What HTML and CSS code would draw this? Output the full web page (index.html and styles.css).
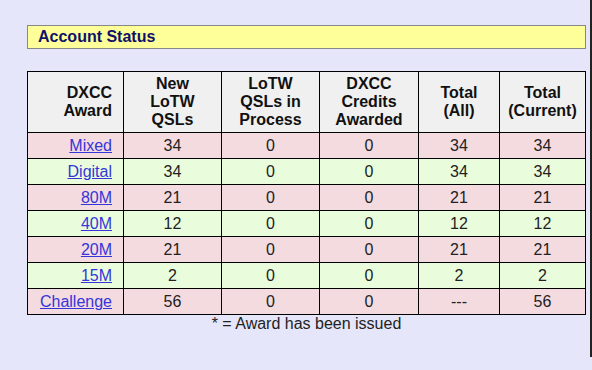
FILE: index.html
```html
<!DOCTYPE html>
<html>
<head>
<meta charset="utf-8">
<link rel="stylesheet" href="styles.css">
</head>
<body>
<div class="page">
  <div class="status">Account Status</div>
  <table class="awards">
    <colgroup>
      <col class="c1"><col class="c2"><col class="c3"><col class="c4"><col class="c5"><col class="c6">
    </colgroup>
    <thead>
      <tr class="head">
        <th class="name">DXCC<br>Award</th>
        <th>New<br>LoTW<br>QSLs</th>
        <th>LoTW<br>QSLs in<br>Process</th>
        <th>DXCC<br>Credits<br>Awarded</th>
        <th>Total<br>(All)</th>
        <th>Total<br>(Current)</th>
      </tr>
    </thead>
    <tbody>
      <tr class="pink"><td class="name"><a href="#">Mixed</a></td><td>34</td><td>0</td><td>0</td><td>34</td><td>34</td></tr>
      <tr class="green"><td class="name"><a href="#">Digital</a></td><td>34</td><td>0</td><td>0</td><td>34</td><td>34</td></tr>
      <tr class="pink"><td class="name"><a href="#">80M</a></td><td>21</td><td>0</td><td>0</td><td>21</td><td>21</td></tr>
      <tr class="green"><td class="name"><a href="#">40M</a></td><td>12</td><td>0</td><td>0</td><td>12</td><td>12</td></tr>
      <tr class="pink"><td class="name"><a href="#">20M</a></td><td>21</td><td>0</td><td>0</td><td>21</td><td>21</td></tr>
      <tr class="green"><td class="name"><a href="#">15M</a></td><td>2</td><td>0</td><td>0</td><td>2</td><td>2</td></tr>
      <tr class="pink"><td class="name"><a href="#">Challenge</a></td><td>56</td><td>0</td><td>0</td><td>---</td><td>56</td></tr>
    </tbody>
  </table>
  <div class="note">* = Award has been issued</div>
</div>
</body>
</html>
```
FILE: styles.css
```css
html, body {
  margin: 0;
  padding: 0;
  background: #e6e6fa;
  font-family: "Liberation Sans", Arial, sans-serif;
}
.page {
  box-sizing: border-box;
  width: 592px;
  height: 357px;
  padding: 25px 0 0 27px;
  border-right: 2px solid #222;
}
.status {
  box-sizing: border-box;
  width: 559px;
  height: 24px;
  border: 1px solid #888;
  background: #ffff99;
  color: #10106a;
  font-weight: bold;
  font-size: 16px;
  line-height: 21px;
  padding-left: 10px;
}
.awards {
  margin-top: 22px;
  width: 559px;
  border-collapse: collapse;
  table-layout: fixed;
  font-size: 16px;
  color: #222;
}
.c1 { width: 96px; }
.c2 { width: 98px; }
.c3 { width: 98px; }
.c4 { width: 99px; }
.c5 { width: 81px; }
.c6 { width: 86px; }
.awards th, .awards td {
  border: 1px solid #000;
  padding: 0 2px;
  text-align: center;
  line-height: 18px;
}
.awards th {
  background: #f0f0f0;
  color: #111;
  font-weight: bold;
  height: 60px;
}
.awards td {
  height: 25px;
}
.awards .name {
  text-align: right;
  padding-right: 11px;
}
.pink td { background: #f3dbe0; }
.green td { background: #e9fddc; }
.awards a {
  color: #3535d8;
  text-decoration: underline;
}
.note {
  width: 559px;
  text-align: center;
  font-size: 16px;
  line-height: 18px;
  color: #222;
}
```
